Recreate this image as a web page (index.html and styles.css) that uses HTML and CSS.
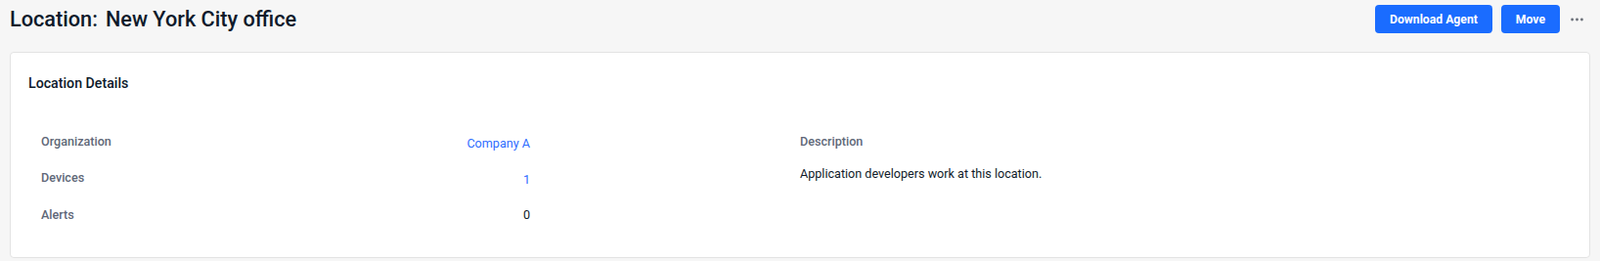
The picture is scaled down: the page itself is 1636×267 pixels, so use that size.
FILE: index.html
```html
<!DOCTYPE html>
<html lang="en">
<head>
  <meta charset="UTF-8">
  <meta name="viewport" content="width=device-width, initial-scale=1.0">
  <title>Location: New York City office</title>
  <link rel="stylesheet" href="styles.css">
</head>
<body>
  <div class="page">
    <header class="page-header">
      <h1 class="page-title"><span class="title-label">Location:</span><span>New York City office</span></h1>
      <div class="header-actions">
        <button class="btn btn-primary">Download Agent</button>
        <button class="btn btn-primary">Move</button>
        <button class="btn-more" aria-label="More actions">
          <svg width="13" height="4" viewBox="0 0 13 4">
            <circle cx="1.6" cy="2" r="1.4"></circle>
            <circle cx="6.5" cy="2" r="1.4"></circle>
            <circle cx="11.4" cy="2" r="1.4"></circle>
          </svg>
        </button>
      </div>
    </header>

    <section class="card">
      <h2 class="card-title">Location Details</h2>

      <div class="details">
        <div class="details-col details-col-left">
          <div class="detail-row">
            <div class="detail-label">Organization</div>
            <div class="detail-value is-link"><a href="#">Company A</a></div>
          </div>
          <div class="detail-row">
            <div class="detail-label">Devices</div>
            <div class="detail-value is-link"><a href="#">1</a></div>
          </div>
          <div class="detail-row">
            <div class="detail-label">Alerts</div>
            <div class="detail-value">0</div>
          </div>
        </div>

        <div class="details-col">
          <div class="detail-label">Description</div>
          <p class="description">Application developers work at this location.</p>
        </div>
      </div>
    </section>
  </div>
</body>
</html>
```

FILE: styles.css
```css
* {
  margin: 0;
  padding: 0;
  box-sizing: border-box;
}

body {
  font-family: Roboto, "Liberation Sans", Arial, sans-serif;
  background: #f6f6f6;
  color: #111c2b;
}

.page {
  padding: 5px 10px 0;
}

/* Header */
.page-header {
  display: flex;
  align-items: center;
  justify-content: space-between;
  height: 29px;
}

.page-title {
  font-size: 21.7px;
  line-height: 28px;
  font-weight: 500;
  color: #0e1a2b;
  display: flex;
  gap: 8px;
}

.header-actions {
  display: flex;
  align-items: center;
  gap: 9px;
}

.btn {
  height: 29px;
  padding: 0 15px;
  border: none;
  border-radius: 4px;
  font-family: inherit;
  font-size: 12.2px;
  font-weight: 700;
  cursor: pointer;
}

.btn-primary {
  background: #1a6cff;
  color: #ffffff;
}

.btn-more {
  background: none;
  border: none;
  display: flex;
  align-items: center;
  padding: 0 7px 0 2px;
  height: 29px;
  fill: #6a6f78;
  cursor: pointer;
}

/* Card */
.card {
  margin-top: 19px;
  background: #ffffff;
  border: 1px solid #e3e3e3;
  border-radius: 4px;
  padding: 21px 18px 34px;
}

.card-title {
  font-size: 14.2px;
  line-height: 20px;
  font-weight: 500;
  color: #0e1a2b;
}

.details {
  display: grid;
  grid-template-columns: 1fr 1fr;
  margin-top: 41px;
}

.details-col-left {
  padding-left: 13px;
  display: flex;
  flex-direction: column;
  gap: 17.6px;
}

.detail-row {
  display: flex;
  align-items: flex-start;
  justify-content: space-between;
  width: 500px;
}

.detail-label {
  font-size: 12.6px;
  line-height: 18px;
  font-weight: 500;
  color: #5f6878;
}

.detail-value {
  font-size: 12.6px;
  line-height: 18px;
  color: #111c2b;
}

.detail-value.is-link {
  padding-top: 1.7px;
}

.detail-value a {
  color: #2f6dff;
  text-decoration: none;
}

.description {
  margin-top: 15px;
  font-size: 12.6px;
  line-height: 18px;
  color: #111c2b;
}
```
